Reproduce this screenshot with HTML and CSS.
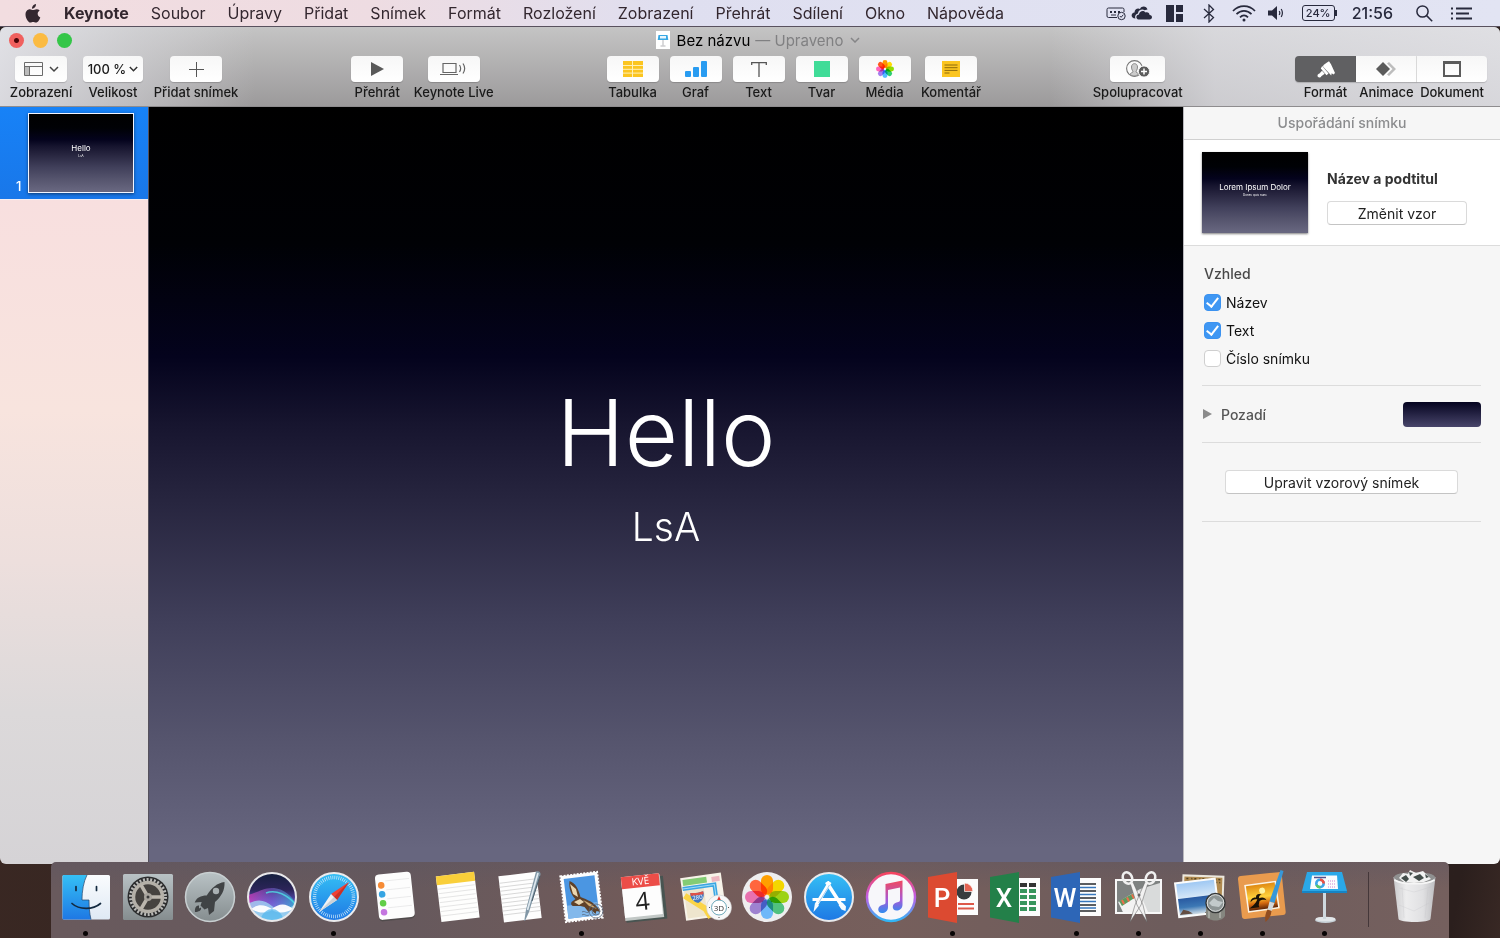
FILE: index.html
```html
<!DOCTYPE html>
<html lang="cs">
<head>
<meta charset="utf-8">
<title>Bez názvu – Keynote</title>
<link rel="stylesheet" href="styles.css">
</head>
<body>
<svg class="defs" width="0" height="0" aria-hidden="true">
  <defs>
    <symbol id="flower" viewBox="-20 -20 40 40">
      <g class="petals">
        <rect x="-5.5" y="-20" width="11" height="18" rx="5.5" fill="#f8a21c"/>
        <rect x="-5.5" y="-20" width="11" height="18" rx="5.5" fill="#e8d427" transform="rotate(45)"/>
        <rect x="-5.5" y="-20" width="11" height="18" rx="5.5" fill="#a5cb45" transform="rotate(90)"/>
        <rect x="-5.5" y="-20" width="11" height="18" rx="5.5" fill="#69b98a" transform="rotate(135)"/>
        <rect x="-5.5" y="-20" width="11" height="18" rx="5.5" fill="#80b5e3" transform="rotate(180)"/>
        <rect x="-5.5" y="-20" width="11" height="18" rx="5.5" fill="#9985bd" transform="rotate(225)"/>
        <rect x="-5.5" y="-20" width="11" height="18" rx="5.5" fill="#cf7aa6" transform="rotate(270)"/>
        <rect x="-5.5" y="-20" width="11" height="18" rx="5.5" fill="#ee7053" transform="rotate(315)"/>
      </g>
    </symbol>
    <linearGradient id="silver" x1="0" y1="0" x2="0" y2="1"><stop offset="0" stop-color="#b9c2c5"/><stop offset="1" stop-color="#858d8f"/></linearGradient>
    <linearGradient id="blue" x1="0" y1="0" x2="0" y2="1"><stop offset="0" stop-color="#35c0f5"/><stop offset="1" stop-color="#1e78e4"/></linearGradient>
    <linearGradient id="face" x1="0" y1="0" x2="0" y2="1"><stop offset="0" stop-color="#fafcfe"/><stop offset="1" stop-color="#dfe9f4"/></linearGradient>
    <linearGradient id="sunset" x1="0" y1="0" x2="0" y2="1"><stop offset="0" stop-color="#e08a12"/><stop offset=".5" stop-color="#ffd23c"/><stop offset=".75" stop-color="#d76b10"/><stop offset="1" stop-color="#5c2408"/></linearGradient>
    <linearGradient id="tunes" x1="0" y1="0" x2="0" y2="1"><stop offset="0" stop-color="#f5445f"/><stop offset=".5" stop-color="#c05fe6"/><stop offset="1" stop-color="#30b6f6"/></linearGradient>
    <linearGradient id="note" x1="0" y1="0" x2="0" y2="1"><stop offset="0" stop-color="#f1485f"/><stop offset=".6" stop-color="#a55ad8"/><stop offset="1" stop-color="#2f8df0"/></linearGradient>
    <linearGradient id="siri" x1="0" y1="0" x2="0" y2="1"><stop offset="0" stop-color="#15203e"/><stop offset=".35" stop-color="#2c2459"/><stop offset=".6" stop-color="#5a4fb8"/><stop offset="1" stop-color="#8fc9f0"/></linearGradient>
    <linearGradient id="siriPink" x1="0" y1="0" x2="1" y2="0"><stop offset="0" stop-color="#f03ac0"/><stop offset=".5" stop-color="#8a6ae8" stop-opacity=".7"/><stop offset="1" stop-color="#25c9d8"/></linearGradient>
    <linearGradient id="sea" x1="0" y1="0" x2="0" y2="1"><stop offset="0" stop-color="#9fc8f3"/><stop offset=".45" stop-color="#d4e6f7"/><stop offset=".48" stop-color="#2a5ba2"/><stop offset=".75" stop-color="#3c78b5"/><stop offset="1" stop-color="#d4e0e8"/></linearGradient>
    <linearGradient id="bin" x1="0" y1="0" x2="1" y2="0"><stop offset="0" stop-color="#c9c9cb"/><stop offset=".3" stop-color="#ededee"/><stop offset=".7" stop-color="#e0e0e2"/><stop offset="1" stop-color="#bdbdc0"/></linearGradient>
    <clipPath id="siriClip"><circle cx="28" cy="28" r="24"/></clipPath>
  </defs>
</svg>

<header class="menubar">
  <nav class="menus" aria-label="Hlavní nabídka">
    <button class="apple" aria-label="Apple"><svg width="16" height="19" viewBox="0 0 16 19"><path fill="currentColor" d="M11 0c.1 1.300-.400 2.500-1.100 3.300-.7.900-1.800 1.500-2.900 1.400-.1-1.200.4-2.400 1.100-3.200C8.800.7 10 .1 11 0zM14.700 6.400c-1.300.8-2 1.900-2 3.400 0 1.700 1 3 2.600 3.600-.3 1-.8 2-1.500 3-.9 1.300-1.800 2.100-3 2.100-1 0-1.500-.6-2.700-.6-1.300 0-1.700.6-2.700.6-1.200 0-2-.9-2.900-2.100C1.200 14.700.5 12.600.5 10.500c0-3.200 2-5.300 4.400-5.300 1.300 0 2.200.8 3.200.8.900 0 2-.8 3.500-.8 1.200 0 2.300.4 3.100 1.200z"/></svg></button>
    <button class="app-name">Keynote</button>
    <button>Soubor</button>
    <button>Úpravy</button>
    <button>Přidat</button>
    <button>Snímek</button>
    <button>Formát</button>
    <button>Rozložení</button>
    <button>Zobrazení</button>
    <button>Přehrát</button>
    <button>Sdílení</button>
    <button>Okno</button>
    <button>Nápověda</button>
  </nav>
  <div class="status">
    <svg width="20" height="16" viewBox="0 0 20 16" fill="none" stroke="currentColor"><path d="M11 12.500H2.500a1.500 1.500 0 0 1-1.500-1.500V4.500A1.500 1.500 0 0 1 2.500 3h14A1.500 1.500 0 0 1 18 4.500V7"/><path d="M4 7h2M8 7h2M12 7h2" stroke-width="1.800"/><path d="M5 10h5"/><circle cx="15.500" cy="11" r="3.700"/><path d="m13.800 11 1.300 1.300 2.200-2.600"/></svg>
    <svg class="cloud" width="22" height="14" viewBox="0 0 22 14"><path fill="currentColor" d="M4.500 12.500C-.5 12.500-.5 7 3.500 6.500 3.500 3 7 1.500 9 3c1.500-3.300 6.500-3.300 7.500.5l-3 .7C11 2.500 7 4.500 7 7.500 4.500 8 3.500 10.500 4.500 12.500z"/><path fill="currentColor" d="M7.500 13.500c-3-.5-2.800-4.800.5-5 .2-3.800 5-4.800 6.600-2 2-.8 4 .5 4 2.500 3.400.3 3 4.500 0 4.500z"/></svg>
    <svg class="tiles" width="17" height="17" viewBox="0 0 17 17"><path fill="currentColor" d="M0 0h8v17H0zM10 0h7v7h-7zM10 9h7v8h-7z"/></svg>
    <svg class="bluetooth" width="12" height="19" viewBox="0 0 12 19" fill="none" stroke="currentColor" stroke-width="1.300"><path d="m1 5 9.500 8.500L6 18V1l4.500 4.500L1 14"/></svg>
    <svg class="wifi" width="24" height="17" viewBox="0 0 24 17" fill="none" stroke="currentColor" stroke-width="1.700"><path d="M1 6C7-.5 17-.5 23 6M4.500 9.200c4.300-4.500 10.700-4.500 15 0M8 12.300c2.500-2.600 5.500-2.600 8 0"/><circle cx="12" cy="15" r="1.500" fill="currentColor" stroke="none"/></svg>
    <svg class="volume" width="16" height="14" viewBox="0 0 16 14"><path fill="currentColor" d="M0 4.500h4L9 0v14L4 9.500H0z"/><path d="M11.200 5c.8 1.300.8 2.700 0 4M13.200 3c1.500 2.500 1.500 5.500 0 8" fill="none" stroke="currentColor" stroke-width="1.200"/></svg>
    <span class="battery">24%</span>
    <span class="clock">21:56</span>
    <svg class="search" width="17" height="17" viewBox="0 0 17 17" fill="none" stroke="currentColor" stroke-width="1.500"><circle cx="6.500" cy="6.500" r="5.600"/><path d="m10.600 10.600 5.600 5.600"/></svg>
    <svg class="list" width="22" height="13" viewBox="0 0 22 13" stroke="currentColor" stroke-width="2"><path d="M0 1.500h2M5 1.500h16M0 6.500h2M5 6.500h13M0 11.500h2M5 11.500h16"/></svg>
  </div>
</header>

<main class="window">
  <div class="chrome">
    <div class="titlebar">
      <div class="lights"><button class="light close" aria-label="Zavřít"></button><button class="light minimize" aria-label="Minimalizovat"></button><button class="light zoom" aria-label="Zvětšit"></button></div>
      <div class="title">
        <svg width="14" height="18" viewBox="0 0 14 18"><path fill="#fff" d="M0 0h14v18H0z"/><path d="M2.500 4h9l.8 5H1.700z" fill="#38a8e4"/><path d="M4 5h6v2.500H4z" fill="#e8f6fd"/><path d="M7 9v5.500M4.500 15h5" stroke="#b5b5b8" fill="none"/></svg>
        <h1>Bez názvu</h1><span class="edited">— Upraveno</span>
        <svg width="10" height="6" viewBox="0 0 10 6" fill="none" stroke="#858587" stroke-width="1.500"><path d="m1 1 4 4 4-4"/></svg>
      </div>
    </div>
    <div class="toolbar" role="toolbar" aria-label="Nástroje">
      <div class="group">
        <label class="tool w-view"><button class="key"><svg width="36" height="15" viewBox="0 0 36 15" fill="none" stroke="#6b6b6b"><path d="M1.500.5h18v13h-18zM1.500 4.500h18M6.500 4.500v9"/><path d="M2 5h4v8H2z" fill="#bbb" stroke="none"/><path d="m27 5 4 4 4-4" stroke="#444" stroke-width="1.500"/></svg></button><span>Zobrazení</span></label>
        <label class="tool w-zoom"><button class="key wide">100 %<svg width="9" height="6" viewBox="0 0 9 6" fill="none" stroke="#333" stroke-width="1.500"><path d="m.8 1 3.700 3.700L8.200 1"/></svg></button><span>Velikost</span></label>
        <label class="tool w-add"><button class="key"><svg width="15" height="15" viewBox="0 0 15 15" stroke="#555"><path d="M7.500 0v15M0 7.500h15"/></svg></button><span>Přidat snímek</span></label>
      </div>
      <div class="group">
        <label class="tool"><button class="key"><svg width="14" height="14" viewBox="0 0 14 14"><path fill="#595959" d="m1 0 13 7-13 7z"/></svg></button><span>Přehrát</span></label>
        <label class="tool w-live"><button class="key"><svg width="27" height="14" viewBox="0 0 27 14" fill="none" stroke="#666" stroke-width="1.200"><path d="M3 1.500h13v9H3zM0 12.500h18M19.500 3c1.300 2 1.300 5 0 7M23 1.500c2 3 2 7 0 10"/></svg></button><span>Keynote Live</span></label>
      </div>
      <div class="group">
        <label class="tool"><button class="key"><svg width="20" height="16" viewBox="0 0 20 16"><path fill="#fbc521" d="M0 0h20v16H0z"/><path d="M0 4.500h20M0 8.300h20M0 12.100h20M9.500 0v16" stroke="#fff0b8"/></svg></button><span>Tabulka</span></label>
        <label class="tool"><button class="key"><svg width="22" height="16" viewBox="0 0 22 16" fill="#299cf1"><rect y="10" width="6" height="6" rx="1"/><rect x="8" y="6" width="6" height="10" rx="1"/><rect x="16" width="6" height="16" rx="1"/></svg></button><span>Graf</span></label>
        <label class="tool"><button class="key"><svg width="16" height="15" viewBox="0 0 16 15" fill="none" stroke="#555" stroke-width="1.300"><path d="M.7 3V.7h14.600V3M8 .7V15"/></svg></button><span>Text</span></label>
        <label class="tool"><button class="key"><svg width="16" height="16" viewBox="0 0 16 16"><path fill="#40dc98" d="M0 0h16v16H0z"/></svg></button><span>Tvar</span></label>
        <label class="tool"><button class="key"><svg class="vivid" width="18" height="18"><use href="#flower"/></svg></button><span>Média</span></label>
        <label class="tool w-note"><button class="key"><svg width="18" height="16" viewBox="0 0 18 16"><path fill="#fbc521" d="M0 0h18v16H0z"/><path d="M2.500 4h13M2.500 6.700h13M2.500 9.400h13M2.500 12h5" stroke="#8d6a0c"/></svg></button><span>Komentář</span></label>
      </div>
      <div class="group">
        <label class="tool w-share"><button class="key medium"><svg width="24" height="18" viewBox="0 0 24 18"><circle cx="8.500" cy="8.500" r="7.900" fill="none" stroke="#777" stroke-width="1.100"/><path d="M4 14.500c.3-1.700 2.300-1.700 3-2.500.2-1-1.500-2-1.500-5 0-4.500 6-4.500 6 0 0 3-1.700 4-1.500 5 .5.700 2 1 2.700 1.700-2.500 2.800-6 2.800-8.700.8z" fill="#ccc" stroke="#888"/><circle cx="18" cy="11.500" r="5.600" fill="#5c5c5c" stroke="#f8f8f8"/><path d="M18 8.500v6M15 11.500h6" stroke="#fff" stroke-width="1.500"/></svg></button><span>Spolupracovat</span></label>
      </div>
      <div class="segments">
        <label class="tool w-format"><button class="seg first active" aria-pressed="true"><svg width="18" height="17" viewBox="0 0 18 17" fill="#fff"><path d="M6.500 4 10 1.500 12 .3l2 3 1.500 3.200L18 12l-1.500 1.500-1.800-1.300-.5 2.300-2-2.300L6 5.500zM5.200 5l6.300 7.500-2 1.700L3.800 7.500zM5 9.800l2.700 3-3.400 2.400c-.5 1.800-3.800 2-3.800-.6 0-1.300 1.200-1.700 2-2z"/></svg></button><span>Formát</span></label>
        <label class="tool w-anim"><button class="seg"><svg width="20" height="14" viewBox="0 0 20 14"><path d="m11 1.500 2-1.500 7 7-7 7-2-1.500L16.500 7z" fill="#bdbdbd"/><path fill="#5b5b5b" d="m7 0 7 7-7 7-7-7z"/></svg></button><span>Animace</span></label>
        <label class="tool w-doc"><button class="seg last"><svg width="18" height="16" viewBox="0 0 18 16" fill="none" stroke="#5b5b5b"><path d="M1 1.500h16V15H1z" stroke-width="2"/><path d="M0 1.500h18" stroke-width="3"/></svg></button><span>Dokument</span></label>
      </div>
    </div>
  </div>

  <div class="workspace">
    <aside class="navigator">
      <div class="slide-row"><span class="slide-number">1</span><div class="thumb slide-bg"><span class="mini-title">Hello</span><span class="mini-sub">LsA</span></div></div>
    </aside>
    <section class="canvas slide-bg"><h2>Hello</h2><p>LsA</p></section>
    <aside class="inspector">
      <h3>Uspořádání snímku</h3>
      <div class="layout-card">
        <div class="master slide-bg"><span class="mini-title">Lorem Ipsum Dolor</span><span class="mini-sub">Donec quis nunc</span></div>
        <div class="layout-info"><strong>Název a podtitul</strong><button class="push">Změnit vzor</button></div>
      </div>
      <div class="options">
        <fieldset>
          <legend>Vzhled</legend>
          <label><input type="checkbox" checked>Název</label>
          <label><input type="checkbox" checked>Text</label>
          <label><input type="checkbox">Číslo snímku</label>
        </fieldset>
        <div class="background"><button class="disclosure"><svg width="9" height="10" viewBox="0 0 9 10"><path fill="#8b8b8b" d="m0 0 9 5-9 5z"/></svg>Pozadí</button><button class="swatch" aria-label="Barva pozadí"></button></div>
        <div class="edit"><button class="push">Upravit vzorový snímek</button></div>
      </div>
    </aside>
  </div>
</main>

<footer class="dock">
  <a href="#" class="app running" aria-label="Finder"><svg viewBox="0 0 56 56"><rect x="4.500" y="6" width="47.500" height="44.500" rx="1.500" fill="url(#face)"/><path fill="url(#blue)" d="M6 6h23c-3.500 7-5 16-5 25h7c0 7 .5 13 2 19.500H6c-1 0-1.500-.5-1.500-1.500V7.500C4.500 6.500 5 6 6 6z"/><path d="M29 6c-3.500 7-5 16-5 25h7c0 7 .5 13 2 19.500" fill="none" stroke="#24456a" stroke-width=".7"/><path d="M18 17.500v4M38.500 17.500v4M14 34.500c7 6.500 21 6.500 28.500 0" fill="none" stroke="#13293f" stroke-width="1.700" stroke-linecap="round"/></svg></a>
  <a href="#" class="app" aria-label="Předvolby systému"><svg viewBox="0 0 56 56"><rect x="3" y="5" width="50" height="46" rx="1.500" fill="url(#silver)"/><circle cx="28" cy="28" r="20.500" fill="#2b2c2d"/><circle cx="28" cy="28" r="17.500" fill="none" stroke="#b9b9b7" stroke-width="3" stroke-dasharray="2 1.660"/><circle cx="28" cy="28" r="14.500" fill="#45423f" stroke="#b4b0a8" stroke-width="3.500"/><path d="M28 28H42M28 28l-7-12M28 28l-7 12" stroke="#bbb6ad" stroke-width="3.500"/><circle cx="28" cy="28" r="4" fill="#a8a49d"/><circle cx="28" cy="28" r="1.500" fill="#3a3a3a"/></svg></a>
  <a href="#" class="app" aria-label="Launchpad"><svg viewBox="0 0 56 56"><circle cx="28" cy="28" r="24.500" fill="url(#silver)" stroke="#c8cfd1" stroke-width="1.500"/><path fill="#404345" d="M42.500 13c.5 8-3 14.500-9.500 20l-1 9-5 4-1-7-3.500 1.500-4-4 1.200-3.500-7 .5c2-5 6-7 12-7 5-8 10.500-12.500 17.800-13.500z"/><path fill="#404345" d="M17 36.500c-3-.5-4.500 3-4 6.500 3.500 0 6.800-1.500 6-4.500l-2 1z"/><circle cx="34" cy="22" r="3.200" fill="#a9b0b2"/></svg></a>
  <a href="#" class="app" aria-label="Siri"><svg viewBox="0 0 56 56"><g clip-path="url(#siriClip)"><path fill="url(#siri)" d="M4 4h48v48H4z"/><path d="M4 26c9-2 16-8 26-7s18 8 22 16v6H4z" fill="url(#siriPink)" opacity=".65"/><path d="M22 24c10-4 22 2 30 12" fill="none" stroke="#4fe0e6" stroke-width="1.500" opacity=".8"/><path d="M4 35c10-6 17-4 24 2s16 5 24-3v14L38 54H14z" fill="#9fdcf6" opacity=".75"/><path d="M7 40c8-6 14-4 21 0 7-6 14-6 21 0-7 4-14 5-21 1-7 4-14 3-21-1z" fill="#fff" opacity=".95"/><path d="M16 52c2-9 8-12 12-12s10 3 12 12" fill="#52b6ec" opacity=".7"/></g><circle cx="28" cy="28" r="24" fill="none" stroke="#e8e8ea" stroke-width="2"/></svg></a>
  <a href="#" class="app running" aria-label="Safari"><svg viewBox="0 0 56 56"><circle cx="28" cy="28" r="24" fill="url(#blue)" stroke="#ececee" stroke-width="2"/><circle cx="28" cy="28" r="19.500" fill="none" stroke="#cfeafa" stroke-width="3.500" stroke-dasharray=".7 1.340"/><path fill="#ef4136" d="M43 13 31 31l-6-6z"/><path fill="#f1f2f4" d="M13 43 25 25l6 6z"/><path fill="#c83228" d="M43 13 31 31l-3-3z"/><path fill="#cbd2d8" d="m13 43 15-15 3 3z"/></svg></a>
  <a href="#" class="app" aria-label="Připomínky"><svg viewBox="0 0 56 56"><g transform="rotate(-6 28 28)"><rect x="10" y="5" width="36" height="46" rx="4" fill="#504b4c"/><rect x="10" y="4" width="36" height="45.500" rx="4" fill="#fdfdfd"/><path d="M20 11h24M20 20h24M20 29h24M20 38h24" stroke="#e3e3e5" stroke-width=".7"/><circle cx="15.500" cy="15" r="3.300" fill="#f68b36"/><circle cx="15.500" cy="24" r="3.300" fill="#36a5e3"/><circle cx="15.500" cy="33" r="3.300" fill="#62ce48"/><circle cx="15.500" cy="42" r="3.300" fill="#c475df"/></g></svg></a>
  <a href="#" class="app" aria-label="Poznámky"><svg viewBox="0 0 56 56"><g transform="rotate(-7 28 28)"><path fill="#fefefd" d="M9.500 5h38.500v46H9.500z"/><path fill="#f9cf3a" d="M9.500 5h38.500v9H9.500z"/><path d="M10 18h37M10 22.500h37M10 27h37M10 31.500h37M10 36h37M10 40.500h37M10 45h37" stroke="#dcdcdc" stroke-width=".7"/></g></svg></a>
  <a href="#" class="app" aria-label="TextEdit"><svg viewBox="0 0 56 56"><g transform="rotate(-7 28 28)"><path fill="#fefefe" d="M10 5h38v46.500H10z"/><path d="M10 12h38M10 16h38M10 20h38M10 24h38M10 28h38M10 32h38M10 36h38M10 40h38M10 44h38" stroke="#cacaca" stroke-width=".7"/></g><path fill="#8197a6" d="M45 2.500c2.500-1 5 .5 4.500 3L38 43l-4 9-.7-.3L35 40.500 45 2.500z"/><path d="M47 4 36.500 41" stroke="#dfe9f0" stroke-width="1.700"/><path d="m49 7-8 25" stroke="#4b5e6b"/></svg></a>
  <a href="#" class="app running" aria-label="Mail"><svg viewBox="0 0 56 56"><g transform="rotate(-7 28 28)"><path fill="#fdfdfd" stroke="#fdfdfd" stroke-width="2" stroke-dasharray="2 1.300" d="M10 5h37v46H10z"/><path fill="#4b96e2" d="M13 8h31v40H13z"/><path fill="#82b8eb" d="M13 35h31v13H13z"/></g><path fill="#5f4128" d="M16.500 12c6 2 9 8 11 16l5 2c7 3 11 6 15 13l-4-1-1 3-4-4-3 2-4-5-4-1-7 0c-2 0-3-2-2-4l4-3c-4-4-7-10-6-18z"/><path fill="#ead6b0" d="m17 15 6 5 2 8-5-3zM21 33l6-3 4 3-5 3z"/><path fill="#cfab72" d="m30 31 8 4 6 5-8-3z"/><g fill="none" stroke="#59677c" opacity=".8"><circle cx="43" cy="42" r="7"/><circle cx="43" cy="42" r="4"/><path d="M29 43c3-2 4 2 7 0M29 46c3-2 4 2 7 0"/></g></svg></a>
  <a href="#" class="app" aria-label="Kalendář"><svg viewBox="0 0 56 56"><g transform="rotate(-6 28 28)"><path fill="#485451" d="M9 9h41v43H9z"/><path fill="#c2c8c6" d="M8 7h39v43H8z"/><path fill="#fdfdfd" d="M8 6h38v41H8z"/><path fill="#ec4d48" d="M8 6h38v12H8z"/><text x="27" y="15.500" class="cal-month">KVĚ</text><text x="27" y="41" class="cal-day">4</text></g></svg></a>
  <a href="#" class="app" aria-label="Mapy"><svg viewBox="0 0 56 56"><g transform="rotate(-8 28 28)"><path fill="#f7f3e9" d="M6 6h41v43H6z"/><path fill="#eee5cd" d="M8 16h20v31H8z"/><path fill="#83cc74" d="M8 8h24v6H8z"/><path fill="#edb6c0" d="M37 9h8v5h-8z"/><path d="M7 17h32v30" fill="none" stroke="#3ba6e3" stroke-width="4"/><path d="M7 17h32v30" fill="none" stroke="#a5dcf5"/><path d="m8 24 19 16 4 9" fill="none" stroke="#fbd447" stroke-width="6"/><path d="M14 22c5 1 8 1 13 0 1 6-2 9-6.500 11C16 31 13 28 14 22z" fill="#4378c2"/><path fill="#df5148" d="M14 22c5 1 8 1 13 0v3H14z"/><text x="20.500" y="29.500" class="shield">280</text></g><circle cx="42" cy="38.500" r="12.500" fill="#f8f8f8" stroke="#c7c7c7" stroke-width=".5"/><circle cx="42" cy="38.500" r="7.500" fill="#fff" stroke="#6aa7b8"/><path fill="#dc3931" d="m40.200 31 1.800-4 1.800 4z"/><text x="42" y="41.500" class="three-d">3D</text><path d="M32 38.500h1M51 38.500h1M42 48v1" stroke="#555"/></svg></a>
  <a href="#" class="app" aria-label="Fotky"><svg viewBox="0 0 56 56"><circle cx="28" cy="28" r="25" fill="#eeeeef"/><use class="photo" href="#flower" x="6" y="6" width="44" height="44"/></svg></a>
  <a href="#" class="app" aria-label="App Store"><svg viewBox="0 0 56 56"><circle cx="28" cy="28" r="24" fill="url(#blue)" stroke="#e9eaec" stroke-width="2"/><g stroke="#fff" stroke-width="3.500" fill="none"><path d="M11.500 30.500h33" stroke-width="3"/><path d="m29 13-13.500 22.500M25.500 13 40 35.500"/></g><path fill="#f7fbfe" d="m14 34 4 2.500-5.500 6.500zM37.500 36l4-2.500 3.500 4-.5 4.500-4-1.500z"/><path d="m28.500 16-11 18" stroke="#7ab9ee" stroke-width=".7"/></svg></a>
  <a href="#" class="app" aria-label="iTunes"><svg viewBox="0 0 56 56"><circle cx="28" cy="28" r="24" fill="#f7f7fa" stroke="url(#tunes)" stroke-width="2.500"/><path fill="url(#note)" d="m22.500 15 17-3.500v24c0 4-3 6-6 6-5 0-5-7 0-8 3-.6 3.500-1 3.500-3V18.500l-12 2.500v17c0 4-3 6-6 6-5 0-5-7 0-8 3-.6 3.500-1 3.500-3z"/></svg></a>
  <a href="#" class="app running" aria-label="PowerPoint"><svg viewBox="0 0 56 56"><path fill="#fcfcfc" d="M30 10h23v36H30z"/><circle cx="39" cy="23" r="7.500" fill="#393c3e"/><path fill="#e46353" stroke="#fcfcfc" stroke-width=".7" d="M39.500 14a8.500 8.500 0 0 1 8.500 8.500h-8.500z"/><path d="M33 35h16M33 39.500h16" stroke="#dd5849" stroke-width="2"/><path fill="#dc4a31" d="M3 8 32 3v51L3 48.500z"/><text x="17" y="38" class="office">P</text></svg></a>
  <a href="#" class="app" aria-label="Excel"><svg viewBox="0 0 56 56"><path fill="#fcfcfc" d="M30 9h23v38H30z"/><path fill="#333" d="M33 14h7v4h-7zM42 14h7v4h-7z"/><path fill="#37955c" d="M33 20h7v4h-7zM42 20h7v4h-7zM33 26h7v4h-7zM42 26h7v4h-7zM33 32h7v4h-7zM42 32h7v4h-7zM33 38h7v4h-7zM42 38h7v4h-7z"/><path fill="#238049" d="M3 8 32 3v51L3 48.500z"/><text x="17" y="38" class="office">X</text></svg></a>
  <a href="#" class="app running" aria-label="Word"><svg viewBox="0 0 56 56"><path fill="#fcfcfc" d="M30 9h23v38H30z"/><path d="M32 15h16M32 22h16M32 29h16M32 36h16M32 42h16" stroke="#26292c" stroke-width="1.700"/><path d="M32 18.500h16M32 25.500h16M32 32.500h16M32 39h16" stroke="#3777bd" stroke-width="1.300"/><path fill="#2d66b7" d="M3 8 32 3v51L3 48.500z"/><text x="17" y="38" class="office">W</text></svg></a>
  <a href="#" class="app running" aria-label="Sejmout obrazovku"><svg viewBox="0 0 56 56"><path fill="#f8f8f8" d="M5 10h47v35H5z"/><path fill="#7e8281" d="M7 12h43v31H7z"/><path fill="#d9dbdb" d="M50 14v29H13L8 33l22-13z"/><path fill="#f3f3f3" d="m13 43-4-9 20-12 9 21z"/><path fill="#5c9a5e" d="m9 32 15-8 2 4-14 9z"/><path d="m12 31 2 4M17 28.500l2 4M22 25.500l2 4" stroke="#ee6d4d" stroke-width="2"/><path fill="#f2f2f2" stroke="#5f5f5f" stroke-width=".5" d="m20 14 3-1 10 23 4 17-10-17zM38 14l-3-1-10 23-5 17 11-17z"/><g fill="none" stroke="#f0f0f0" stroke-width="2.500"><ellipse cx="17.500" cy="9" rx="4.500" ry="6" transform="rotate(-25 17.500 9)"/><ellipse cx="40.500" cy="9" rx="4.500" ry="6" transform="rotate(25 40.500 9)"/></g><circle cx="29" cy="26" r="1.500" fill="#666"/></svg></a>
  <a href="#" class="app running" aria-label="Náhled"><svg viewBox="0 0 56 56"><g transform="rotate(2 30 20)"><path fill="#ece7dc" d="M10 6h42v31H10z"/><path fill="#b08a50" d="M12 8h38v28H12z"/><path d="M14 10h34M15 13h33" stroke="#50401f" stroke-width="1.500" stroke-dasharray="2 3 1 2"/></g><g transform="rotate(-7 24 29)"><path fill="#fbfbfb" d="M4 11h42v36H4z"/><path fill="url(#sea)" d="M6 13h38v32H6z"/><path fill="#634d43" d="m6 44 4-5 5 2 4 3zM31 45l5-5 8-3v8z"/></g><path d="M34 35v12c3 6 16 6 19 0V35z" fill="#85867f"/><path d="M37 40v9M48 40v9" stroke="#bec0ba" opacity=".6" stroke-width="2"/><circle cx="43.500" cy="34" r="9.500" fill="#8d9595" stroke="#353737" stroke-width="1.500"/><circle cx="43.500" cy="34" r="8.300" fill="none" stroke="#dddfde"/><path d="m37 34 5-5 4 3 5 1-4 5-7-1z" fill="#c2cacb"/></svg></a>
  <a href="#" class="app running" aria-label="Obrázky"><svg viewBox="0 0 56 56"><rect x="6" y="5" width="44" height="43" rx="3" fill="#e99b4e" transform="rotate(-6 28 28)"/><g transform="rotate(-8 26 28)"><path fill="#fbf4e6" d="M12 14h32v28H12z"/><path fill="url(#sunset)" d="M13.500 15.500h29v25h-29z"/><circle cx="29" cy="22" r="3" fill="#fff2a0"/><path fill="#191207" d="M14 38c4-3 6-3 9-8-3-1-5 0-7 2 0-3 3-5 6-4 0-3 3-4 6-2-2 0-3 1-3 3 3-1 6 0 7 3-3-1-5-1-7 0-1 3-2 4-1 6z"/></g><path fill="#3798d9" d="m46.500 1 3 1-9 32-5-1.500z"/><path fill="#d2d8da" d="m35.500 32.500 5 1.500-3 8-4-1.500z"/><path fill="#914d20" d="m33.500 40.500 4 1.500c-.5 5-2.500 8-6 11-1-5 0-9 2-12.500z"/></svg></a>
  <a href="#" class="app running" aria-label="Keynote"><svg viewBox="0 0 56 56"><ellipse cx="29.500" cy="51" rx="10.500" ry="3" fill="#c6d0d6"/><ellipse cx="29.500" cy="50" rx="10" ry="2.300" fill="#e2e7ea"/><path d="M28.500 24v26" stroke="#cfd8de" stroke-width="3"/><path fill="#2aa8e8" d="M11 3h35l5 19H6z"/><path fill="#1684c4" d="M6 22h45v2H6z"/><path fill="#fafcfd" d="M16 6.500h25l1 13.500H14z"/><path d="M18 8.500h12" stroke="#50518e" stroke-width="1.500"/><circle cx="24" cy="14.500" r="3.700" fill="none" stroke="#3da5ea" stroke-width="2.600"/><path d="M24 10.800a3.700 3.700 0 0 1 3.700 3.700" fill="none" stroke="#ef5142" stroke-width="2.600"/><path d="M20.500 16a3.700 3.700 0 0 0 4 2" fill="none" stroke="#58c768" stroke-width="2.600"/><path d="M32 12h7M32 15h7M32 18h7" stroke="#cb83d1" stroke-dasharray="1 1"/></svg></a>
  <span class="divider"></span>
  <a href="#" class="app trash" aria-label="Koš"><svg viewBox="0 0 56 56"><path fill="url(#bin)" d="M7.500 8h42l-5 42c-.5 4-31 4-32 0z"/><ellipse cx="28.500" cy="8.500" rx="20.500" ry="5.500" fill="#8f9090"/><path fill="#f2f2f2" d="m13 9 4-5 5 1 2-4 6 3 7-2 4 4 4 4-7 3-10 1-10-1z"/><path fill="#434d4a" d="m15 9 5-3 3 4-3 3zM27 8l7-3 4 4-5 3zM23 3l4 1-3 3zM39 5l4 3-3 1z"/><path d="M8.500 11c8 5 32 5 40 0" fill="none" stroke="#f6f6f6" stroke-width="1.500"/><path d="m13 19 15 4 17-5M16 18l2 31M42 20l-3 29M13 36l15 6 15-8" fill="none" stroke="#c1c1c4" opacity=".25"/></svg></a>
</footer>
</body>
</html>
```

FILE: styles.css
```css
* { box-sizing: border-box; }

body {
  margin: 0;
  height: 100vh;
  display: flex;
  flex-direction: column;
  position: relative;
  overflow: hidden;
  font-family: Inter, "Noto Sans", sans-serif;
  font-size: 14px;
  color: #222;
  background: linear-gradient(100deg, #241b1b 0%, #3a2823 4%, #30221f 60%, #2b1f1d 97%, #382824 100%);
}

button {
  padding: 0;
  border: 0;
  background: none;
  font: inherit;
  color: inherit;
}

h1, h2, h3, p { margin: 0; }
svg { display: block; flex: none; }
.defs { position: absolute; }
.petals rect { mix-blend-mode: multiply; }
.vivid { filter: saturate(2); }
.photo { filter: saturate(1.4); }

/* Menu bar */
.menubar {
  height: 27px;
  flex: none;
  display: flex;
  justify-content: space-between;
  align-items: center;
  padding: 0 27px 0 25px;
  border-bottom: 1px solid #59515e;
  background: linear-gradient(90deg, #f2dde0, #eedce2 25%, #dfdff0 45%, #e2e4f3 100%);
  color: #33272f;
  font-size: 16px;
}
.menus { display: flex; align-items: center; gap: 22px; }
.apple { margin-right: 1px; }
.app-name { font-weight: 700; }
.status { display: flex; align-items: center; color: #282a3d; }
.cloud { margin-left: 5px; }
.tiles { margin-left: 13px; }
.bluetooth { margin-left: 20px; }
.wifi { margin-left: 17px; }
.volume { margin-left: 12px; }
.battery {
  position: relative;
  width: 33px;
  height: 16px;
  margin-left: 18px;
  border: 1px solid currentColor;
  border-radius: 3px;
  font-size: 11px;
  font-weight: 500;
  line-height: 14px;
  text-align: center;
}
.battery::after {
  content: "";
  position: absolute;
  right: -3px;
  top: 4px;
  width: 2px;
  height: 6px;
  background: currentColor;
}
.clock { margin-left: 17px; font-weight: 500; }
.search { margin-left: 23px; }
.list { margin-left: 18px; }

/* Window */
.window {
  flex: 1;
  min-height: 0;
  margin-bottom: 74px;
  display: flex;
  flex-direction: column;
  border-radius: 6px;
  overflow: hidden;
}
.chrome {
  flex: none;
  height: 80px;
  border-bottom: 1px solid #8e8c8e;
  background:
    linear-gradient(90deg, rgba(232, 232, 238, .8) 0, rgba(220, 220, 225, .5) 9%, transparent 17%, transparent 70%, rgba(225, 225, 230, .7) 81%, rgba(230, 230, 235, .8) 100%),
    linear-gradient(#c4c4c4, #9c9a9b);
}
.titlebar {
  height: 26px;
  display: grid;
  grid-template-columns: 1fr auto 1fr;
  align-items: center;
  padding-left: 16px;
}
.lights { display: flex; gap: 9px; margin-left: -7px; }
.light { width: 15px; height: 15px; border-radius: 50%; }
.close { background: radial-gradient(circle, #4b0508 0 2px, #f0605e 3px); }
.minimize { background: #fbbb42; }
.zoom { background: #34c648; }
.title { display: flex; align-items: center; gap: 7px; font-size: 15px; }
.title h1 { font-size: 15px; font-weight: 400; color: #000; }
.edited { margin-left: -2px; color: #808082; }

.toolbar {
  display: flex;
  justify-content: space-between;
  padding: 3px 13px 0 10px;
  font-size: 13px;
  font-weight: 500;
  color: #1a1a1a;
}
.group { display: flex; gap: 11px; }
.segments { display: flex; }
.tool {
  width: 52px;
  display: flex;
  flex-direction: column;
  align-items: center;
  gap: 1px;
  line-height: 18px;
  white-space: nowrap;
}
.w-view { width: 62px; }
.w-zoom { width: 60px; }
.w-add { width: 84px; }
.w-live { width: 79px; }
.w-note { width: 59px; }
.w-share { width: 88px; }
.w-format { width: 61px; }
.w-anim { width: 61px; }
.w-doc { width: 70px; }
.key, .seg {
  width: 52px;
  height: 26px;
  display: flex;
  align-items: center;
  justify-content: center;
  gap: 3px;
  border-radius: 4px;
  background: linear-gradient(#f7f7f7, #fff);
  box-shadow: 0 1px 1px rgba(0, 0, 0, .18);
}
.wide { width: 60px; }
.medium { width: 55px; }
.seg { width: 100%; border-radius: 0; border-right: 1px solid #ddd; }
.first { border-radius: 4px 0 0 4px; }
.last { border-radius: 0 4px 4px 0; border-right: 0; }
.active { background: #606062; border-right: 0; }

.workspace {
  flex: 1;
  min-height: 0;
  display: grid;
  grid-template-columns: 148px 1fr 317px;
}
.slide-bg {
  background: linear-gradient(#000 0%, #000105 18%, #04031d 33%, #17152f 42%, #27253f 52%, #403f5a 68%, #56556e 84%, #67667f 98%);
  color: #fff;
  display: flex;
  flex-direction: column;
  align-items: center;
}
.navigator { background: linear-gradient(#f8dfdf 12%, #f8e4de 40%, #eddfdd 60%, #dcd9da 80%, #d5d3d6); }
.slide-row {
  height: 93px;
  display: flex;
  align-items: flex-start;
  gap: 6px;
  padding: 6px 14px 0 16px;
  border-bottom: 1px solid #f4eef4;
  background: linear-gradient(#1782f7, #1977e9);
  color: #fff;
}
.slide-number { width: 6px; align-self: flex-end; margin-bottom: 4px; font-size: 13px; font-weight: 500; line-height: 18px; }
.thumb { width: 106px; height: 80px; border: 1px solid #f2f5ff; box-shadow: 0 1px 3px rgba(0, 0, 0, .5); padding-top: 29px; }
.mini-title { font-size: 8px; line-height: 10px; }
.mini-sub { font-size: 3px; line-height: 6px; }
.canvas { border-left: 1px solid #55515c; padding-top: 270px; font-weight: 300; }
.canvas h2 { font-size: 92px; line-height: 112px; font-weight: 300; }
.canvas p { font-size: 39px; line-height: 48px; margin-top: 14px; }

/* Inspector */
.inspector { border-left: 1px solid #b9b8bd; background: #f6f6f6; }
.inspector h3 {
  height: 33px;
  border-bottom: 1px solid #d0d0d0;
  font-size: 14px;
  line-height: 32px;
  font-weight: 500;
  color: #8b8c8e;
  text-align: center;
}
.layout-card {
  height: 106px;
  display: flex;
  align-items: flex-start;
  gap: 19px;
  padding: 12px 33px 0 18px;
  border-bottom: 1px solid #dcdcdc;
  background: #fff;
}
.master { width: 106px; height: 81px; padding-top: 30px; box-shadow: 0 1px 2px rgba(0, 0, 0, .5); white-space: nowrap; }
.layout-info { flex: 1; display: flex; flex-direction: column; gap: 12px; padding-top: 17px; }
.layout-info strong { line-height: 20px; font-weight: 700; color: #333; }
.push {
  height: 24px;
  border: 1px solid #dadada;
  border-bottom-color: #c4c4c4;
  border-radius: 4px;
  background: #fff;
}
.options { padding: 0 19px 0 18px; }
fieldset { margin: 0; border: 0; border-bottom: 1px solid #dcdcdc; padding: 16px 2px 13px; display: flex; flex-direction: column; }
legend { float: left; padding: 0; margin-bottom: 2px; line-height: 24px; font-weight: 500; color: #484848; }
fieldset label { display: flex; align-items: center; gap: 5px; height: 28px; color: #111; }
fieldset input {
  appearance: none;
  width: 17px;
  height: 17px;
  margin: 0;
  display: grid;
  place-items: center;
  border: 1px solid #cfcfcf;
  border-radius: 4px;
  background: #fff;
}
fieldset input:checked { border-color: #3b92f0; background: #3f97f3; }
fieldset input:checked::after {
  content: "";
  width: 5px;
  height: 10px;
  margin-bottom: 3px;
  border: solid #fff;
  border-width: 0 2px 2px 0;
  transform: rotate(38deg);
}
.background { height: 57px; display: flex; align-items: center; justify-content: space-between; border-bottom: 1px solid #dcdcdc; }
.disclosure { display: flex; align-items: center; gap: 9px; padding-left: 1px; font-weight: 500; color: #555; }
.swatch { width: 78px; height: 25px; border-radius: 4px; background: linear-gradient(#04031f, #48456a); }
.edit { height: 79px; padding: 0 23px; display: flex; align-items: center; border-bottom: 1px solid #dcdcdc; }
.edit .push { flex: 1; }

/* Dock */
.dock {
  position: absolute;
  left: 51px;
  right: 51px;
  bottom: 0;
  height: 76px;
  display: flex;
  padding: 7px 4px 0;
  border-radius: 5px 5px 0 0;
  background: linear-gradient(rgba(90, 84, 98, .35), transparent 35%), linear-gradient(90deg, #695a5d, #66595d 25%, #735b59 45%, #765f5c 60%, #6d5c5c 80%, #75605e);
}
.app { flex: 1; display: flex; flex-direction: column; align-items: center; gap: 6px; }
.app svg { width: 56px; height: 56px; overflow: visible; }
.running::after { content: ""; width: 5px; height: 5px; border-radius: 50%; background: #080505; }
.trash { flex: 0 0 63px; }
.divider { width: 1px; height: 55px; margin: 3px 13px 0; background: #443739; }
.app text { text-anchor: middle; font-family: "Open Sans", sans-serif; }
.cal-month { font-size: 10px; fill: #fff; }
.cal-day { font-size: 25px; fill: #222; }
.shield { font-size: 6px; fill: #fff; }
.three-d { font-size: 8px; fill: #333; }
.app .office { font-family: Roboto, sans-serif; font-size: 26px; font-weight: 500; fill: #fff; }
```
